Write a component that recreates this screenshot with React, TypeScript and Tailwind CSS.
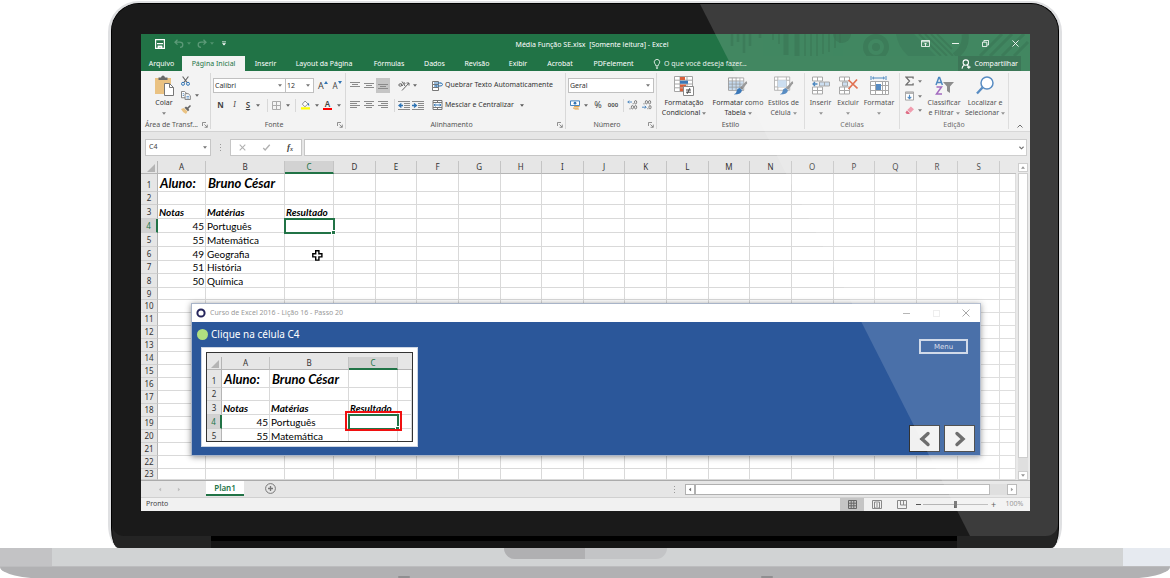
import { useState, type ReactNode } from 'react';
import clsx from 'clsx';

const UI_FONT = "font-['Noto_Sans','Open_Sans',sans-serif]";
const CELL_FONT = "font-['Lato','Open_Sans',sans-serif]";

const TABS = [
  { label: 'Arquivo', width: 'w-[41px]' },
  { label: 'Página Inicial', width: 'w-[63px]' },
  { label: 'Inserir', width: 'w-[41px]' },
  { label: 'Layout da Página', width: 'w-[76px]' },
  { label: 'Fórmulas', width: 'w-[54px]' },
  { label: 'Dados', width: 'w-[37px]' },
  { label: 'Revisão', width: 'w-[48px]' },
  { label: 'Exibir', width: 'w-[34px]' },
  { label: 'Acrobat', width: 'w-[50px]' },
  { label: 'PDFelement', width: 'w-[57px]' },
];

const COLUMNS = 'ABCDEFGHIJKLMNOPQRS'.split('');

interface SheetRow {
  height: string;
  a?: string;
  b?: string;
  c?: string;
}

const DATA_ROWS: SheetRow[] = [
  { height: 'h-[18px]', a: 'Aluno:', b: 'Bruno César' },
  { height: 'h-[13px]' },
  { height: 'h-[14px]', a: 'Notas', b: 'Matérias', c: 'Resultado' },
  { height: 'h-[14px]', a: '45', b: 'Português' },
  { height: 'h-[14px]', a: '55', b: 'Matemática' },
  { height: 'h-[14px]', a: '49', b: 'Geografia' },
  { height: 'h-[13px]', a: '51', b: 'História' },
  { height: 'h-[14px]', a: '50', b: 'Química' },
  { height: 'h-[12px]' },
];

const ROWS: SheetRow[] = [
  ...DATA_ROWS,
  ...Array.from({ length: 13 }, () => ({ height: 'h-[13px]' })),
  { height: 'h-[11px]' },
];

/* ---------- small pieces ---------- */

function Caret({ className }: { className?: string }) {
  return (
    <svg viewBox="0 0 5 3" className={clsx('w-[4px] h-[3px] shrink-0 opacity-80', className)} fill="currentColor" aria-hidden>
      <path d="M0 0h5L2.5 3z" />
    </svg>
  );
}

interface IconButtonProps {
  label: string;
  children: ReactNode;
  className?: string;
  active?: boolean;
}

function IconButton({ label, children, className, active }: IconButtonProps) {
  return (
    <button
      type="button"
      aria-label={label}
      className={clsx('flex items-center justify-center shrink-0', active && 'bg-[#c5c5c5]', className)}
    >
      {children}
    </button>
  );
}

function ComboBox({ label, value, className }: { label: string; value: string; className?: string }) {
  return (
    <label className={clsx('relative flex items-center h-[15px] bg-white border border-[#c0c0c0]', className)}>
      <select
        aria-label={label}
        defaultValue={value}
        className="appearance-none w-full h-full pl-[1px] bg-transparent text-[7px] leading-[12px] text-[#333] outline-none"
      >
        <option>{value}</option>
      </select>
      <Caret className="absolute right-[3px] text-[#555]" />
    </label>
  );
}

interface GroupProps {
  title: string;
  className: string;
  launcher?: boolean;
  children: ReactNode;
}

function RibbonGroup({ title, className, launcher, children }: GroupProps) {
  return (
    <section className={clsx('flex flex-col shrink-0 my-[2px] border-r border-[#d8d8d8]', className)}>
      <div className="flex-1 flex">{children}</div>
      <div className="flex items-center h-[9px] text-[7px] leading-[9px] text-[#555]">
        <span className="flex-1 text-center whitespace-nowrap">{title}</span>
        {launcher && (
          <button type="button" aria-label={`Opções de ${title}`} className="w-[8px]">
            <svg viewBox="0 0 6 6" className="w-[6px] h-[6px]" fill="none" stroke="#777" strokeWidth="0.8">
              <path d="M.5 4V.5H4M2.4 2.4l2.7 2.7M5.3 2.6v2.7H2.6" />
            </svg>
          </button>
        )}
      </div>
    </section>
  );
}

interface BigButtonProps {
  lines: string[];
  className: string;
  children: ReactNode;
}

function BigButton({ lines, className, children }: BigButtonProps) {
  const single = lines.length === 1;
  return (
    <button type="button" className={clsx('flex flex-col items-center shrink-0 text-[7px] leading-[10px] text-[#333]', className)}>
      <span className="flex items-center justify-center h-[25px]">{children}</span>
      <span className="whitespace-nowrap">{lines[0]}</span>
      <span className="flex items-center gap-[2px] h-[10px] whitespace-nowrap">
        {!single && lines[1]}
        <Caret className="text-[#666]" />
      </span>
    </button>
  );
}

/* ---------- title bar and tabs ---------- */

function TitleBar() {
  return (
    <header className="relative flex items-center h-[22px] text-white">
      <svg viewBox="0 0 300 22" className="absolute right-0 top-0 w-[300px] h-[22px]" fill="none" stroke="#185c37" aria-hidden>
        <g strokeWidth="2.5" opacity=".6">
          <path d="M2 0v12M8 0v8M14 0v19M20 0v12M30 0v4" />
          <path d="M43 0v6M49 0v10M75 0v22M81 0v22M87 0v22M93 0v20M99 0v18M105 0v14M110 0v9" strokeWidth="1.5" />
          <path d="M56 0v21M67 0v23" strokeWidth="5" />
        </g>
        <g opacity=".6">
          <circle cx="146" cy="13" r="10.5" strokeWidth="5" />
          <circle cx="146" cy="13" r="4" fill="#185c37" stroke="none" />
          <path d="M103 0a8 8 0 0 0 18 0z" fill="#185c37" stroke="none" />
          <path d="M166 0q2 13 12 22h28L184 0z" fill="#185c37" stroke="none" opacity=".7" />
          <path d="M189 0l22 22M195 0l22 22M201 0l22 22M207 0l15 15" strokeWidth="2" />
          <path d="M235 0q2 13-10 22" strokeWidth="7" />
          <path d="M250 22l22-22M260 22l22-22M272 22l22-22M284 22l14-14" strokeWidth="3" />
        </g>
      </svg>
      <div className="relative flex-1 flex items-center pl-[13px] pb-[3px]">
        <IconButton label="Salvar" className="w-[11px]">
          <svg viewBox="0 0 10 10" className="w-[10px] h-[10px]" fill="none" stroke="white" strokeWidth="1.2">
            <path d="M.6.6h8.8v8.8H.6zM2 4.600h6" />
            <path d="M2.800 6.800h4.400v2.600H5.600V8H4.400v1.400H2.800z" fill="white" strokeWidth=".4" />
          </svg>
        </IconButton>
        <IconButton label="Desfazer" className="w-[20px] ml-[7px] gap-[3px] text-[#5c9a78]">
          <svg viewBox="0 0 10 9" className="w-[10px] h-[9px]" fill="none" stroke="currentColor" strokeWidth="1.3">
            <path d="M3.5.8L1 3.2l2.5 2.4M1.2 3.2h4.6q3 0 3 2.5T6 8.3" />
          </svg>
          <Caret />
        </IconButton>
        <IconButton label="Refazer" className="w-[20px] ml-[3px] gap-[3px] text-[#5c9a78]">
          <svg viewBox="0 0 10 9" className="w-[10px] h-[9px]" fill="none" stroke="currentColor" strokeWidth="1.3">
            <path d="M6.5.8L9 3.2 6.5 5.6M8.8 3.2H4.2q-3 0-3 2.5T4 8.3" />
          </svg>
          <Caret />
        </IconButton>
        <IconButton label="Personalizar barra de acesso rápido" className="w-[6px] ml-[6px]">
          <svg viewBox="0 0 5 5" className="w-[4px] h-[5px]" fill="white">
            <path d="M0 0h5v1H0zM0 2.2h5L2.5 5z" />
          </svg>
        </IconButton>
      </div>
      <h1 className="relative text-[7px] leading-[12px] whitespace-pre">Média Função SE.xlsx  [Somente leitura] - Excel</h1>
      <div className="relative flex-1 flex justify-end pb-[3px]">
        <IconButton label="Opções de exibição da faixa" className="w-[30px]">
          <svg viewBox="0 0 10 8" className="w-[9px] h-[7px]" fill="none" stroke="white">
            <path d="M.5.5h9v7h-9zM.5 2h9M5 7V3.6M3.4 5L5 3.4 6.6 5" />
          </svg>
        </IconButton>
        <IconButton label="Minimizar" className="w-[30px]">
          <span className="w-[7px] h-px bg-white/90" />
        </IconButton>
        <IconButton label="Restaurar" className="w-[30px]">
          <svg viewBox="0 0 8 8" className="w-[7px] h-[7px]" fill="none" stroke="white">
            <path d="M.5 2.5h5v5h-5zM2.2 2.2V.5h5.3v5.2H6" />
          </svg>
        </IconButton>
        <IconButton label="Fechar" className="w-[30px]">
          <svg viewBox="0 0 8 8" className="w-[7px] h-[7px]" fill="none" stroke="white">
            <path d="M.5.5l7 7M7.5.5l-7 7" />
          </svg>
        </IconButton>
      </div>
    </header>
  );
}

function TabStrip() {
  const [active, setActive] = useState('Página Inicial');
  return (
    <nav className="flex h-[15px] text-[7px] leading-[14px] text-white">
      {TABS.map(tab => (
        <button
          key={tab.label}
          type="button"
          onClick={() => setActive(tab.label)}
          className={clsx('shrink-0 whitespace-nowrap text-center', tab.width, tab.label === active && 'bg-[#f3f3f3] text-[#217346]')}
        >
          {tab.label}
        </button>
      ))}
      <label className="flex flex-1 items-center gap-[3px] ml-[11px]">
        <svg viewBox="0 0 8 11" className="w-[8px] h-[10px] shrink-0" fill="none" stroke="white" strokeWidth=".9">
          <path d="M2.7 7.5Q2.7 6.3 1.7 5.3A3 3 0 1 1 6.3 5.3Q5.3 6.3 5.3 7.5zM2.8 9h2.4M3.2 10.4h1.6" />
        </svg>
        <input
          aria-label="O que você deseja fazer"
          placeholder="O que você deseja fazer..."
          className="w-[120px] bg-transparent outline-none placeholder:text-[#e4f0e9]"
        />
      </label>
      <button type="button" className="flex items-center gap-[3px] mr-[9px] px-[3px] bg-[#1b5e3a]">
        <svg viewBox="0 0 10 10" className="w-[10px] h-[10px]" fill="none" stroke="white" strokeWidth="1.1">
          <circle cx="4.8" cy="3.6" r="2.7" />
          <path d="M1 9.6Q1.2 6.8 3.4 6.2M6 6.3l1 .6M7.8 6.4v3.4M6.1 8.1h3.4" />
        </svg>
        Compartilhar
      </button>
    </nav>
  );
}

/* ---------- ribbon ---------- */

type LineSpec = [number, number, number];

function LinesIcon({ lines }: { lines: LineSpec[] }) {
  return (
    <svg viewBox="0 0 10 9" className="w-[10px] h-[9px]" stroke="#8a8a8a" strokeWidth="1" aria-hidden>
      {lines.map(([x1, x2, y]) => (
        <path key={y} d={`M${x1} ${y}H${x2}`} />
      ))}
    </svg>
  );
}

function IndentIcon({ flip }: { flip?: boolean }) {
  return (
    <svg viewBox="0 0 12 9" className="w-[12px] h-[9px]" aria-hidden>
      <path d="M0 .5h12M6 2.5h6M6 4.5h6M6 6.5h6M0 8.5h12" stroke="#8a8a8a" />
      <path
        d={flip ? 'M0 4.5h3.5M2 2.5l2.4 2L2 6.5' : 'M1.5 4.5H5M3.4 2.5L1 4.5l2.4 2'}
        stroke="#2f74b5"
        strokeWidth="1.3"
        fill="none"
      />
    </svg>
  );
}

function DecimalIcon({ increase }: { increase?: boolean }) {
  return (
    <svg viewBox="0 0 11 10" className="w-[11px] h-[10px]" fill="none" stroke="#666" strokeWidth=".8" aria-hidden>
      {increase ? (
        <>
          <path d="M5 2H.8M2.2.6L.8 2l1.4 1.4" stroke="#2f74b5" />
          <ellipse cx="8.6" cy="2.2" rx="1.1" ry="1.7" />
          <ellipse cx="5.4" cy="7.2" rx="1.1" ry="1.7" />
          <ellipse cx="8.6" cy="7.2" rx="1.1" ry="1.7" />
          <path d="M3 8.2v1.2M6.2 3.2v1" />
        </>
      ) : (
        <>
          <path d="M1 7.2h4M3.8 5.8l1.4 1.4-1.4 1.4" stroke="#2f74b5" />
          <ellipse cx="5.4" cy="2.2" rx="1.1" ry="1.7" />
          <ellipse cx="8.6" cy="2.2" rx="1.1" ry="1.7" />
          <ellipse cx="9" cy="7.2" rx="1.1" ry="1.7" />
          <path d="M3 3.2v1.2M6.8 8.2v1" />
        </>
      )}
    </svg>
  );
}

function BrushMark() {
  return (
    <>
      <path d="M19 5q1.5 0 1 2l-5 7-2.5-2z" fill="#8a8a8a" />
      <path d="M12 12.2l2.6 2q0 4.8-8.6 4.8 3-1 3-3.6 0-2.4 3-3.2z" fill="#3b78b8" />
    </>
  );
}

function Ribbon() {
  return (
    <div className="flex h-[60px] bg-[#f3f3f3] text-[#444]">
      <RibbonGroup title="Área de Transf..." className="w-[70px]" launcher>
        <BigButton lines={['Colar']} className="w-[34px] ml-[6px]">
          <svg viewBox="0 0 19 21" className="w-[19px] h-[21px]">
            <path d="M0 3h16v16H0z" fill="#eac282" />
            <path d="M3.5 5V2.5H6Q6.5.5 8 .5t2 2h2.5V5z" fill="#6a6a6a" />
            <path d="M9.5 8.5h5l4 4v8h-9z" fill="white" stroke="#777" />
            <path d="M14.5 8.5v4h4" fill="none" stroke="#777" />
          </svg>
        </BigButton>
        <div className="flex flex-col gap-[5px] pt-[3px] w-[24px]">
          <IconButton label="Recortar" className="w-[9px] h-[9px]">
            <svg viewBox="0 0 9 10" className="w-[9px] h-[10px]" fill="none">
              <path d="M1.6.5l4.5 6M7.4.5l-4.5 6" stroke="#666" strokeWidth="1.2" />
              <circle cx="2" cy="7.8" r="1.5" stroke="#2f74b5" />
              <circle cx="7" cy="7.8" r="1.5" stroke="#2f74b5" />
            </svg>
          </IconButton>
          <IconButton label="Copiar" className="w-[18px] h-[10px] gap-[4px]">
            <svg viewBox="0 0 11 10" className="w-[10px] h-[9px]" fill="white" stroke="#777">
              <path d="M.5.5H4l2 2v5H.5z" />
              <path d="M4.5 3H8l2.3 2.2v4.3H4.5z" />
              <path d="M6 6h3M6 7.8h3M1.8 3h1.5M1.800 5h1.500" stroke="#2f74b5" strokeWidth=".8" />
            </svg>
            <Caret />
          </IconButton>
          <IconButton label="Pincel de formatação" className="w-[10px] h-[9px]">
            <svg viewBox="0 0 10 9" className="w-[10px] h-[9px]">
              <path d="M0 4l3-1 3.500 3.500L5 9Q2 8 0 4z" fill="#eac282" />
              <path d="M3.5 2.8L5 1.5l1.3 1L9 0l1 1-2.600 2.700.9 1.300L7 6.300z" fill="#666" />
            </svg>
          </IconButton>
        </div>
      </RibbonGroup>

      <RibbonGroup title="Fonte" className="w-[135px]" launcher>
        <div className="flex flex-col gap-[5px] pt-[5px] pl-[2px] w-full">
          <div className="flex items-center">
            <ComboBox label="Fonte" value="Calibri" className="w-[73px]" />
            <ComboBox label="Tamanho da fonte" value="12" className="w-[28px] border-l-0" />
            <IconButton label="Aumentar fonte" className="w-[14px] text-[9px] leading-[12px] ml-[2px]">
              A
              <svg viewBox="0 0 4 3" className="w-[4px] h-[3px] mb-[7px]" fill="#2f74b5"><path d="M0 3h4L2 0z" /></svg>
            </IconButton>
            <IconButton label="Diminuir fonte" className="w-[14px] text-[8px] leading-[12px]">
              A
              <svg viewBox="0 0 4 3" className="w-[4px] h-[3px] mb-[7px]" fill="#2f74b5"><path d="M0 0h4L2 3z" /></svg>
            </IconButton>
          </div>
          <div className="flex items-center h-[14px] pl-[3px] text-[8px]">
            <IconButton label="Negrito" className="w-[9px] font-bold">N</IconButton>
            <IconButton label="Itálico" className="w-[9px] ml-[5px] italic font-serif">I</IconButton>
            <IconButton label="Sublinhado" className="w-[16px] ml-[6px] gap-[6px]">
              <span className="underline font-semibold">S</span>
              <Caret />
            </IconButton>
            <span className="w-px h-[13px] ml-[6px] bg-[#d8d8d8]" />
            <IconButton label="Bordas" className="w-[18px] ml-[4px] gap-[5px]">
              <svg viewBox="0 0 9 9" className="w-[9px] h-[9px]" fill="none" stroke="#aaa"><path d="M.5.5h8v8h-8zM4.5.5v8M.5 4.5h8" /></svg>
              <Caret />
            </IconButton>
            <span className="w-px h-[13px] ml-[5px] bg-[#d8d8d8]" />
            <IconButton label="Cor de preenchimento" className="w-[18px] ml-[5px] gap-[5px]">
              <svg viewBox="0 0 10 10" className="w-[10px] h-[10px]">
                <path d="M4.500.6l3.200 3.200-3.400 3.200L1.500 4z" fill="white" stroke="#777" strokeWidth=".9" />
                <path d="M7.5 2.5Q9.5 3 9.200 6.500 7.500 6 7.500 2.500z" fill="#2f74b5" />
                <path d="M0 7.500h10V10H0z" fill="#ffff00" />
              </svg>
              <Caret />
            </IconButton>
            <IconButton label="Cor da fonte" className="w-[18px] ml-[4px] gap-[5px]">
              <span className="w-[10px] text-center font-semibold leading-[8px] border-b-2 border-[#f00]">A</span>
              <Caret />
            </IconButton>
          </div>
        </div>
      </RibbonGroup>

      <RibbonGroup title="Alinhamento" className="w-[220px]" launcher>
        <div className="flex flex-col gap-[5px] pt-[5px] pl-[2px] w-[86px]">
          <div className="flex items-center h-[15px]">
            <IconButton label="Alinhar em cima" className="w-[14px]"><LinesIcon lines={[[0, 10, 1.5], [2, 8, 3.5], [0, 10, 5.5]]} /></IconButton>
            <IconButton label="Alinhar no meio" className="w-[14px]"><LinesIcon lines={[[0, 10, 2.5], [2, 8, 4.5], [0, 10, 6.5]]} /></IconButton>
            <IconButton label="Alinhar embaixo" className="w-[14px] h-[15px]" active><LinesIcon lines={[[0, 10, 3.5], [2, 8, 5.5], [0, 10, 7.5]]} /></IconButton>
            <IconButton label="Orientação" className="w-[20px] ml-[7px] gap-[3px]">
              <svg viewBox="0 0 12 10" className="w-[12px] h-[10px]" fill="none" stroke="#666">
                <path d="M4 9.5L11 2M8.5 2H11v2.6" />
                <ellipse cx="2.3" cy="4" rx="1.5" ry="1.2" />
                <path d="M3.2 2.5l1.5 2.500M4 .5l3 4.500M6.500 3.500q1.500-1.500-.8-2" />
              </svg>
              <Caret />
            </IconButton>
          </div>
          <div className="flex items-center h-[14px]">
            <IconButton label="Alinhar à esquerda" className="w-[14px]"><LinesIcon lines={[[0, 10, 0.5], [0, 7, 2.5], [0, 10, 4.5], [0, 7, 6.5]]} /></IconButton>
            <IconButton label="Centralizar" className="w-[14px]"><LinesIcon lines={[[0, 10, 0.5], [2, 8, 2.5], [0, 10, 4.5], [2, 8, 6.5]]} /></IconButton>
            <IconButton label="Alinhar à direita" className="w-[14px]"><LinesIcon lines={[[0, 10, 0.5], [3, 10, 2.5], [0, 10, 4.5], [3, 10, 6.5]]} /></IconButton>
            <span className="w-px h-[13px] ml-[4px] bg-[#d8d8d8]" />
            <IconButton label="Diminuir recuo" className="w-[12px] ml-[3px]"><IndentIcon /></IconButton>
            <IconButton label="Aumentar recuo" className="w-[12px] ml-[2px]"><IndentIcon flip /></IconButton>
          </div>
        </div>
        <div className="flex flex-col gap-[5px] pt-[5px] text-[7px] text-[#333]">
          <button type="button" className="flex items-center gap-[2px] h-[15px] whitespace-nowrap">
            <svg viewBox="0 0 11 10" className="w-[11px] h-[10px]" fill="none" stroke="#777">
              <path d="M.5.5h6v3h-6zM.5 3.5h6v3h-6zM.5 6.5h6v3h-6z" fill="white" />
              <path d="M2 2h7M2 5h6q2.5 0 2.5-1.5T8.5 2M5 3.6L3.6 5 5 6.4" stroke="#2f74b5" />
            </svg>
            Quebrar Texto Automaticamente
          </button>
          <button type="button" className="flex items-center gap-[2px] h-[14px] whitespace-nowrap">
            <svg viewBox="0 0 10 10" className="w-[11px] h-[10px]" fill="white" stroke="#777">
              <path d="M.5.5h9v9h-9zM.5 2.5h9M.5 7.5h9M5 .5v2M5 7.5v2" />
              <path d="M1.5 5h7M3 3.7L1.7 5 3 6.3M7 3.7L8.3 5 7 6.3" stroke="#2f74b5" fill="none" />
            </svg>
            Mesclar e Centralizar
            <Caret className="ml-[4px]" />
          </button>
        </div>
      </RibbonGroup>

      <RibbonGroup title="Número" className="w-[91px]" launcher>
        <div className="flex flex-col gap-[5px] pt-[5px] pl-[2px] w-full">
          <ComboBox label="Formato de número" value="Geral" className="w-[86px]" />
          <div className="flex items-center h-[14px] pl-[2px]">
            <IconButton label="Formato de contabilização" className="w-[18px] gap-[4px]">
              <svg viewBox="0 0 11 10" className="w-[11px] h-[10px]">
                <path d="M.5.5h10v5H.5z" fill="white" stroke="#2f74b5" />
                <circle cx="5.5" cy="3" r="1.5" fill="#2f74b5" />
                <path d="M4.5 6h6v1.2h-6zM3.5 7.8h6V9h-6zM5 9.3h5v.7H5z" fill="#e3a64f" />
              </svg>
              <Caret />
            </IconButton>
            <IconButton label="Estilo de porcentagem" className="w-[10px] ml-[5px] text-[9px]">%</IconButton>
            <IconButton label="Separador de milhares" className="w-[14px] ml-[3px] text-[6px] font-semibold">000</IconButton>
            <span className="w-px h-[13px] ml-[3px] bg-[#d8d8d8]" />
            <IconButton label="Aumentar casas decimais" className="w-[11px] ml-[3px]"><DecimalIcon increase /></IconButton>
            <IconButton label="Diminuir casas decimais" className="w-[11px] ml-[3px]"><DecimalIcon /></IconButton>
          </div>
        </div>
      </RibbonGroup>

      <RibbonGroup title="Estilo" className="w-[148px]">
        <BigButton lines={['Formatação', 'Condicional']} className="w-[54px]">
          <svg viewBox="0 0 20 20" className="w-[20px] h-[20px]">
            <path d="M.5.5h18v15H.5zM.5 4.2h18M.5 8h18M.5 11.8h18M6 .5v15M13 .5v15" fill="white" stroke="#a5a5a5" />
            <path d="M6 1h5v3H6zM6 8.5h6v3H6zM6 12.3h3v3H6z" fill="#d9603b" />
            <path d="M6 4.7h8v3H6z" fill="#3b78b8" />
            <path d="M9.5 10.5h10v9h-10z" fill="white" stroke="#888" />
            <path d="M12 14h5M12 16.2h5M15.8 12.2l-2.6 5.6" stroke="#444" />
          </svg>
        </BigButton>
        <BigButton lines={['Formatar como', 'Tabela']} className="w-[54px]">
          <svg viewBox="0 0 21 20" className="w-[20px] h-[20px]">
            <path d="M.5 1.5h16v13H.5z" fill="white" stroke="#999" />
            <path d="M1 5h15v9H1z" fill="#c3d9ee" />
            <path d="M.5 4.7h16M.5 8h16M.5 11.2h16M4.5 1.5v13M8.500 1.500v13M12.500 1.500v13" stroke="#999" strokeWidth=".8" />
            <BrushMark />
          </svg>
        </BigButton>
        <BigButton lines={['Estilos de', 'Célula']} className="w-[37px]">
          <svg viewBox="0 0 21 20" className="w-[20px] h-[20px]">
            <path d="M.5.5h16v14H.5zM.5 4h16M.5 11h16M4 .5v14M13 .5v14" fill="white" stroke="#a5a5a5" />
            <path d="M4 4h9v7H4z" fill="#c3d9ee" />
            <BrushMark />
          </svg>
        </BigButton>
      </RibbonGroup>

      <RibbonGroup title="Células" className="w-[95px]">
        <BigButton lines={['Inserir']} className="w-[31px]">
          <svg viewBox="0 0 18 20" className="w-[18px] h-[20px]" fill="white" stroke="#999">
            <path d="M.5 1h5v4h-5zM5.5 1h5v4h-5zM.5 11h5v3.5h-5zM5.5 11h5v3.5h-5zM.5 14.5h5V18h-5zM5.5 14.5h5V18h-5z" />
            <path d="M7.5 6h5v4h-5zM12.5 6h5v4h-5z" fill="#c3d9ee" />
            <path d="M5.5 8H1M3 6L1 8l2 2" stroke="#2f74b5" fill="none" strokeWidth="1.3" />
          </svg>
        </BigButton>
        <BigButton lines={['Excluir']} className="w-[24px]">
          <svg viewBox="0 0 19 20" className="w-[19px] h-[20px]" fill="white" stroke="#999">
            <path d="M.5 1h5v4h-5zM5.5 1h5v4h-5zM.5 11h5v3.5h-5zM5.5 11h5v3.5h-5zM.5 14.5h5V18h-5zM5.5 14.5h5V18h-5z" />
            <path d="M3.5 6h5v4h-5z" fill="#c3d9ee" />
            <path d="M9.5 4l9 8.500M18 3.500l-8.500 9.500" stroke="#dc5a36" strokeWidth="1.7" />
          </svg>
        </BigButton>
        <BigButton lines={['Formatar']} className="w-[38px]">
          <svg viewBox="0 0 19 20" className="w-[19px] h-[20px]" fill="none">
            <path d="M1 0v4M16 0v4M2.5 2h12M4 .7L2.6 2 4 3.3M13 .7L14.4 2 13 3.3" stroke="#2f74b5" />
            <path d="M.5 5.5h18v13H.5zM.5 9.5h18M.5 14.5h18M5.5 5.5v13M12.5 5.5v13M15.5 5.5v13" fill="white" stroke="#999" />
            <path d="M6 8h5v6H6z" fill="#3b78b8" />
          </svg>
        </BigButton>
      </RibbonGroup>

      <RibbonGroup title="Edição" className="w-[109px]">
        <div className="flex flex-col gap-[5px] pt-[3px] pl-[5px] w-[24px]">
          <IconButton label="AutoSoma" className="w-[17px] h-[10px] gap-[4px]">
            <svg viewBox="0 0 10 10" className="w-[10px] h-[10px]" fill="none" stroke="#555" strokeWidth="1.4">
              <path d="M9 2.5V.8H1.2L5 5 1.2 9.2H9V7.5" />
            </svg>
            <Caret />
          </IconButton>
          <IconButton label="Preencher" className="w-[17px] h-[10px] gap-[4px]">
            <svg viewBox="0 0 10 10" className="w-[10px] h-[10px]" fill="none">
              <path d="M.5.5h9v9h-9z" fill="white" stroke="#888" />
              <path d="M1 1h8v1.5H1z" fill="#888" />
              <path d="M5 3.5V8M3 6l2 2 2-2" stroke="#2f74b5" strokeWidth="1.2" />
            </svg>
            <Caret />
          </IconButton>
          <IconButton label="Limpar" className="w-[17px] h-[9px] gap-[4px]">
            <svg viewBox="0 0 10 9" className="w-[10px] h-[9px]">
              <path d="M6.5 0L10 3 6 7 2.5 4z" fill="#ee8ba0" />
              <path d="M2 4.5l3.500 3-1 1H2L.5 7z" fill="#d9536f" />
            </svg>
            <Caret />
          </IconButton>
        </div>
        <BigButton lines={['Classificar', 'e Filtrar']} className="w-[40px]">
          <svg viewBox="0 0 19 20" className="w-[19px] h-[20px]" fill="none">
            <path d="M1 9l2.8-7.500h.8L7.400 9M2 6.500h4.400" stroke="#2f74b5" strokeWidth="1.5" />
            <path d="M1.5 11h5l-5 7h5.500" stroke="#9453b5" strokeWidth="1.5" />
            <path d="M8 6h11l-4 4.500V17l-3-2v-4.500z" fill="#7a7a7a" />
          </svg>
        </BigButton>
        <BigButton lines={['Localizar e', 'Selecionar']} className="w-[42px]">
          <svg viewBox="0 0 18 19" className="w-[18px] h-[19px]" fill="none">
            <circle cx="11" cy="7" r="6" fill="white" stroke="#3b78b8" strokeWidth="1.5" />
            <path d="M6.5 11.5l-5.500 6" stroke="#3b78b8" strokeWidth="2.3" />
          </svg>
        </BigButton>
      </RibbonGroup>
      <div className="flex-1 flex items-end justify-center pb-[3px]">
        <button type="button" aria-label="Recolher a faixa de opções">
          <svg viewBox="0 0 6 4" className="w-[6px] h-[4px]" fill="none" stroke="#555">
            <path d="M.5 3.5L3 1l2.5 2.5" />
          </svg>
        </button>
      </div>
    </div>
  );
}

function FormulaBar() {
  return (
    <div className="flex items-start h-[30px] pt-[7px] pl-[4px] pr-[3px] border-t border-[#d2d2d2] bg-[#e6e6e6] text-[7px] text-[#444]">
      <label className="relative flex items-center w-[66px] h-[17px] bg-white border border-[#c6c6c6]">
        <input aria-label="Caixa de nome" defaultValue="C4" className="w-full pl-[3px] bg-transparent outline-none" />
        <Caret className="absolute right-[3px] text-[#555]" />
      </label>
      <span className="flex flex-col gap-[2px] w-[19px] h-[17px] items-center justify-center">
        <i className="w-px h-px bg-[#999]" />
        <i className="w-px h-px bg-[#999]" />
        <i className="w-px h-px bg-[#999]" />
      </span>
      <div className="flex items-center justify-around w-[72px] h-[17px] bg-white border border-[#c6c6c6]">
        <IconButton label="Cancelar">
          <svg viewBox="0 0 8 8" className="w-[7px] h-[7px]" stroke="#b0b0b0" strokeWidth="1.2"><path d="M.8.8l6.4 6.4M7.2.8L.8 7.2" /></svg>
        </IconButton>
        <IconButton label="Inserir">
          <svg viewBox="0 0 9 8" className="w-[9px] h-[7px]" fill="none" stroke="#b0b0b0" strokeWidth="1.5"><path d="M.8 4.5L3 6.8 8.2.8" /></svg>
        </IconButton>
        <IconButton label="Inserir função" className="italic font-bold text-[9px] font-['Liberation_Serif',serif]">
          f<sub className="text-[6px]">x</sub>
        </IconButton>
      </div>
      <label className="relative flex flex-1 items-center h-[17px] ml-[2px] bg-white border border-[#c6c6c6]">
        <input aria-label="Barra de fórmulas" className="w-full bg-transparent outline-none" />
        <svg viewBox="0 0 6 4" className="absolute right-[2px] w-[5px] h-[4px]" fill="none" stroke="#555" strokeWidth="1.3">
          <path d="M.5.5L3 3 5.5.5" />
        </svg>
      </label>
    </div>
  );
}

/* ---------- worksheet ---------- */

function cellStyle(row: number, column: number) {
  if (row === 1) return 'text-[13px] italic font-bold pl-[2px]';
  if (row === 3) return 'text-[10px] italic font-bold pl-[1px]';
  if (column === 0) return 'text-[10px] text-right pr-[1px]';
  return 'text-[10px] pl-[1px]';
}

interface SheetTableProps {
  columns: string[];
  rows: SheetRow[];
  firstWidth: string;
  tail: string;
}

function SheetTable({ columns, rows, firstWidth, tail }: SheetTableProps) {
  return (
    <table className={clsx('w-full table-fixed border-separate border-spacing-0 bg-white text-black leading-[10px]', CELL_FONT)}>
      <colgroup>
        <col className={firstWidth} />
        <col className="w-[48px]" />
        <col className="w-[79px]" />
        <col className="w-[49px]" />
        {columns.slice(3).map(column => <col key={column} />)}
        <col className={tail} />
      </colgroup>
      <thead>
        <tr className={clsx('h-[13px] bg-[#e6e6e6] text-[8px] text-[#333]', UI_FONT)}>
          <th className="p-0 border-r border-b border-[#b5b5b5]">
            <svg viewBox="0 0 8 8" className="block ml-auto mr-[2px] mt-[2px] w-[8px] h-[8px]" fill="#b4b4b4"><path d="M8 0v8H0z" /></svg>
          </th>
          {columns.map(column => (
            <th
              key={column}
              className={clsx(
                'p-0 font-normal border-r',
                column === 'C' ? 'bg-[#d2d2d2] text-[#217346] border-b-2 border-r-[#c4c4c4] border-b-[#217346]' : 'border-b border-r-[#c4c4c4] border-b-[#b5b5b5]',
              )}
            >
              {column}
            </th>
          ))}
          <th className="p-0 border-b border-[#b5b5b5]" />
        </tr>
      </thead>
      <tbody>
        {rows.map((row, index) => {
          const number = index + 1;
          return (
            <tr key={number} className={row.height}>
              <th
                className={clsx(
                  'p-0 text-[8px] font-normal border-b border-b-[#cfcfcf]',
                  UI_FONT,
                  number === 1 && 'pt-[4px]',
                  number === 4
                    ? 'bg-[#d2d2d2] text-[#217346] border-r-2 border-r-[#217346]'
                    : 'bg-[#e6e6e6] text-[#333] border-r border-r-[#b5b5b5]',
                )}
              >
                {number}
              </th>
              {columns.map((column, columnIndex) => {
                const value = [row.a, row.b, row.c][columnIndex];
                const selected = number === 4 && column === 'C';
                return (
                  <td
                    key={column}
                    className={clsx(
                      'p-0 whitespace-nowrap',
                      cellStyle(number, columnIndex),
                      selected ? 'relative border border-[#217346] outline outline-1 outline-[#217346]' : 'border-r border-b border-[#d9d9d9]',
                    )}
                  >
                    {value}
                    {selected && <span className="absolute -right-[2px] -bottom-[2px] w-[3px] h-[3px] bg-[#217346] outline outline-1 outline-white" />}
                  </td>
                );
              })}
              <td className="p-0 border-r border-b border-[#d9d9d9]" />
            </tr>
          );
        })}
      </tbody>
    </table>
  );
}

function Worksheet() {
  return (
    <div className="relative flex border-b border-[#ababab] bg-[#e6e6e6]">
      <div className="flex-1">
        <SheetTable columns={COLUMNS} rows={ROWS} firstWidth="w-[17px]" tail="w-[16px]" />
      </div>
      <div className="flex flex-col w-[14px] pl-[2px] pr-[2px] pt-[2px] bg-[#e6e6e6]">
        <button type="button" aria-label="Rolar para cima" className="flex items-center justify-center h-[9px] bg-white border border-[#c6c6c6] text-[#666]">
          <Caret className="rotate-180" />
        </button>
        <div className="h-[285px] mt-[1px] bg-white border border-[#c6c6c6]" />
        <div className="flex-1 bg-[#dadada]" />
        <button type="button" aria-label="Rolar para baixo" className="flex items-center justify-center h-[9px] bg-white border border-[#c6c6c6] text-[#666]">
          <Caret />
        </button>
      </div>
      {/* mouse pointer over the grid */}
      <svg viewBox="0 0 11 11" className="absolute left-[171px] top-[89px] w-[11px] h-[11px]" fill="white" stroke="black" strokeWidth="1.4">
        <path d="M3.7.8h3.2v2.9h3v3.2h-3v3.2H3.7V6.9H.8V3.7h2.9z" />
      </svg>
    </div>
  );
}

function SheetTabs() {
  return (
    <div className="flex items-start h-[17px] bg-[#e6e6e6] border-b border-[#d0d0d0]">
      <div className="flex flex-1 items-start">
        <div className="flex items-center justify-between w-[65px] h-[16px] pl-[17px] pr-[25px] text-[#b5b5b5]">
          <button type="button" aria-label="Planilha anterior"><Caret className="rotate-90" /></button>
          <button type="button" aria-label="Próxima planilha"><Caret className="-rotate-90" /></button>
        </div>
        <button type="button" className="w-[38px] h-[15px] bg-white border-b-2 border-[#217346] text-[8px] leading-[13px] font-semibold text-[#217346]">
          Plan1
        </button>
        <IconButton label="Nova planilha" className="ml-[21px] mt-[2px]">
          <svg viewBox="0 0 11 11" className="w-[11px] h-[11px]" fill="none" stroke="#777">
            <circle cx="5.5" cy="5.5" r="4.9" />
            <path d="M5.5 3v5M3 5.5h5" strokeWidth="1.3" />
          </svg>
        </IconButton>
      </div>
      <span className="flex flex-col gap-[2px] mr-[10px] mt-[5px]">
        <i className="w-px h-px bg-[#999]" />
        <i className="w-px h-px bg-[#999]" />
        <i className="w-px h-px bg-[#999]" />
      </span>
      <div className="flex w-[332px] h-[11px] mr-[13px] mt-[3px] bg-[#dadada]">
        <button type="button" aria-label="Rolar para a esquerda" className="flex items-center justify-center w-[10px] bg-white border border-[#b0b0b0] text-[#555]">
          <Caret className="rotate-90" />
        </button>
        <div className="w-[295px] bg-white border border-[#b0b0b0]" />
        <div className="flex-1" />
        <button type="button" aria-label="Rolar para a direita" className="flex items-center justify-center w-[10px] bg-white border border-[#b0b0b0] text-[#777]">
          <Caret className="-rotate-90" />
        </button>
      </div>
    </div>
  );
}

function StatusBar() {
  const [zoom, setZoom] = useState(100);
  return (
    <footer className="flex items-center h-[13px] pl-[5px] bg-[#f1f1f1] text-[7px] text-[#444]">
      <span className="flex-1">Pronto</span>
      <IconButton label="Normal" className="w-[24px] h-[13px]" active>
        <svg viewBox="0 0 9 9" className="w-[9px] h-[9px]" fill="none" stroke="#666"><path d="M.5.5h8v8h-8zM.5 3.2h8M.5 5.8h8M3.2.5v8M5.8.5v8" /></svg>
      </IconButton>
      <IconButton label="Layout da Página" className="w-[25px]">
        <svg viewBox="0 0 10 9" className="w-[10px] h-[9px]" fill="none" stroke="#888"><path d="M.5.5h9v8h-9zM2.5 2h5v6h-5zM4 4h2M4 6h2" /></svg>
      </IconButton>
      <IconButton label="Quebra de Página" className="w-[25px]">
        <svg viewBox="0 0 10 9" className="w-[10px] h-[9px]" fill="none" stroke="#888"><path d="M.5.5h9v8h-9zM3.5.5V5h3V.5M6.500 5h3" /></svg>
      </IconButton>
      <button type="button" aria-label="Reduzir" className="flex items-center w-[9px] h-[13px] pl-[2px]"><span className="w-[5px] h-[1px] bg-[#555]" /></button>
      <input
        type="range"
        aria-label="Zoom"
        min={0}
        max={200}
        value={zoom}
        onChange={e => setZoom(Number(e.target.value))}
        className="appearance-none w-[65px] h-px bg-[#b5b5b5] [&::-webkit-slider-thumb]:appearance-none [&::-webkit-slider-thumb]:w-[3px] [&::-webkit-slider-thumb]:h-[7px] [&::-webkit-slider-thumb]:bg-[#666]"
      />
      <button type="button" aria-label="Ampliar" className="w-[11px] text-center text-[9px] leading-[9px]">+</button>
      <span className="w-[31px] text-center text-[#888]">{zoom}%</span>
    </footer>
  );
}

/* ---------- course window ---------- */

function CourseWindow() {
  return (
    <section className="absolute left-[50px] right-[49px] bottom-[55px] border border-[#a8b4c8] bg-[#2b579a] shadow-[0_1px_6px_rgba(0,0,0,0.45)]">
      <header className="flex items-center h-[18px] pl-[4px] bg-white text-[7px] text-[#999]">
        <svg viewBox="0 0 10 10" className="w-[10px] h-[10px]" fill="none"><circle cx="5" cy="5" r="3.6" stroke="#25255c" strokeWidth="2" /></svg>
        <h2 className="flex-1 ml-[4px]">Curso de Excel 2016 - Lição 16 - Passo 20</h2>
        <IconButton label="Minimizar janela" className="w-[29px]"><span className="w-[7px] h-px bg-[#aaa]" /></IconButton>
        <IconButton label="Maximizar janela" className="w-[30px]"><span className="w-[7px] h-[7px] border border-[#ececec]" /></IconButton>
        <IconButton label="Fechar janela" className="w-[29px]">
          <svg viewBox="0 0 8 8" className="w-[8px] h-[8px]" stroke="#999"><path d="M.5.5l7 7M7.5.5l-7 7" /></svg>
        </IconButton>
      </header>
      <div className="flex justify-between h-[133px] pr-[5px] pb-[3px]">
        <div className="pl-[5px]">
          <p className="flex items-center gap-[3px] h-[25px] text-[10px] text-white">
            <span className="w-[11px] h-[11px] rounded-full bg-[#b0e080]" />
            Clique na célula C4
          </p>
          <div className="relative w-[217px] h-[100px] ml-[4px] p-[4px] bg-white border border-[#cdd6e4]">
            <div className="h-[90px] pt-[4px] overflow-hidden bg-[#e6e6e6] border border-[#333]">
              <SheetTable columns={['A', 'B', 'C']} rows={DATA_ROWS.slice(0, 5)} firstWidth="w-[15px]" tail="w-[14px]" />
            </div>
            <span className="absolute left-[143px] top-[63px] w-[57px] h-[20px] border-2 border-[#f01010]" />
          </div>
        </div>
        <div className="flex flex-col items-end justify-between pt-[17px]">
          <button type="button" className="w-[49px] h-[15px] mr-[7px] border-2 border-[#c9d4e5] text-[7px] leading-[10px] text-[#d5dce8] font-['DejaVu_Sans',sans-serif]">
            Menu
          </button>
          <div className="flex gap-[4px]">
            <IconButton label="Anterior" className="w-[31px] h-[27px] bg-[#f1f1f1] border border-[#333]">
              <svg viewBox="0 0 12 16" className="w-[12px] h-[16px]" fill="none" stroke="#555" strokeWidth="3.4" strokeLinecap="round"><path d="M9 2.5L3 8l6 5.5" /></svg>
            </IconButton>
            <IconButton label="Próximo" className="w-[31px] h-[27px] bg-[#f1f1f1] border border-[#333]">
              <svg viewBox="0 0 12 16" className="w-[12px] h-[16px]" fill="none" stroke="#555" strokeWidth="3.4" strokeLinecap="round"><path d="M3 2.5L9 8l-6 5.5" /></svg>
            </IconButton>
          </div>
        </div>
      </div>
    </section>
  );
}

/* ---------- laptop ---------- */

function LaptopBase() {
  return (
    <div>
      <div className="flex items-start justify-between h-[19px] bg-[#d1d3d4] border-b border-[#bcbcbe]">
        <span className="w-[52px] h-[18px] bg-[#c3c3c5]" />
        <span className="flex w-[163px] h-[11px] ml-[-5px] rounded-b-[11px] overflow-hidden bg-[#c3c4c6]">
          <span className="w-1/2 bg-[#b0b0b2]" />
        </span>
        <span className="w-[47px] h-[18px] bg-[#e6eaf0]" />
      </div>
      <div className="flex items-end justify-around h-[12px] px-[222px] rounded-b-[50px_12px] bg-[#b1b1b3]">
        <span className="w-[12px] h-[2px] mb-[1px] rounded-full bg-[#8f8f91]" />
        <span className="w-[12px] h-[2px] mb-[1px] rounded-full bg-[#8f8f91]" />
      </div>
    </div>
  );
}

export default function App() {
  return (
    <main className={clsx('overflow-hidden bg-white pt-px', UI_FONT)}>
      <div className="mx-[108px] pt-[2px] px-[3px] rounded-t-[31px] rounded-b-[12px_24px] bg-[#dfe0e2]">
        <div className="relative rounded-t-[28px] rounded-b-[8px_20px] overflow-hidden bg-[#242424] border-t border-x border-black">
          <div className="pt-[30px] pl-[29px] pr-[28px] pb-[25px] rounded-b-[12px] bg-[#1a1a1a]">
            <div className="relative overflow-hidden bg-[#217346]">
              <TitleBar />
              <TabStrip />
              <Ribbon />
              <FormulaBar />
              <Worksheet />
              <SheetTabs />
              <StatusBar />
              <CourseWindow />
            </div>
          </div>
          <div className="h-[12px] ml-[99px] mr-[101px] bg-[#151515] border-t-[5px] border-black" />
          {/* diagonal reflection on the glass */}
          <div className="pointer-events-none absolute inset-x-0 top-0 bottom-[12px] rounded-b-[12px] bg-white/15 [clip-path:polygon(588px_0,100%_0,100%_100%,858px_100%)]" />
        </div>
      </div>
      <LaptopBase />
    </main>
  );
}
